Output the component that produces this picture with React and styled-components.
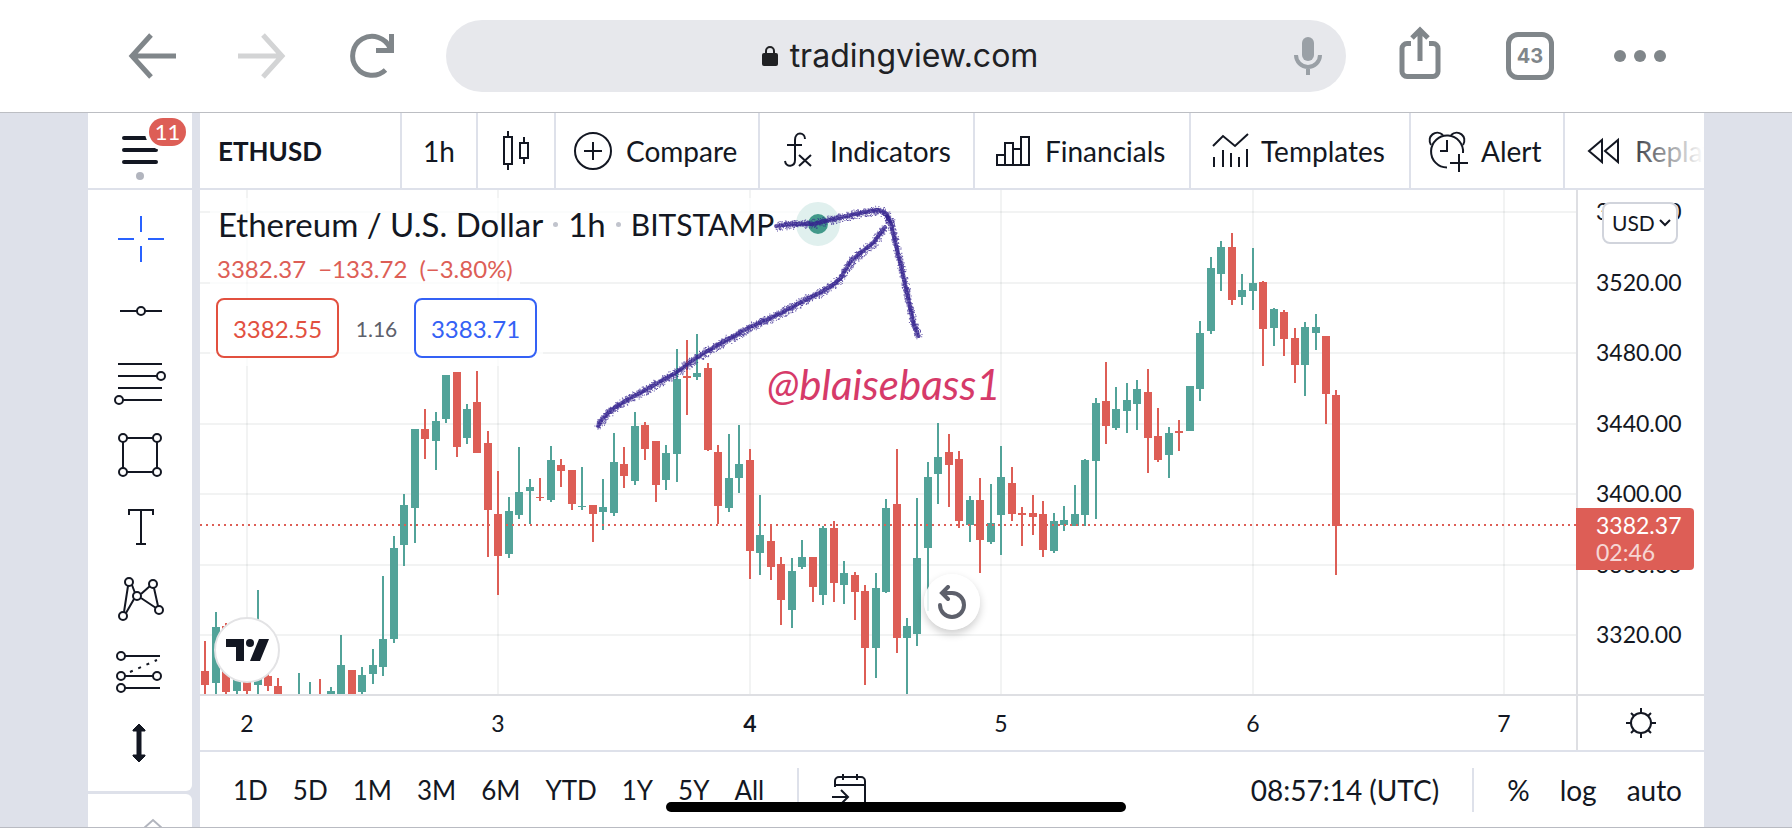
import React, { useState } from "react";
import styled, { createGlobalStyle } from "styled-components";

const GlobalStyle = createGlobalStyle`
	* {
		box-sizing: border-box;
	}
	body {
		margin: 0;
		background: #dee1ea;
		color: #131722;
		font-family: Lato, "Noto Sans", sans-serif;
	}
	button,
	select {
		font: inherit;
		color: inherit;
		background: none;
		border: none;
		padding: 0;
		margin: 0;
		cursor: pointer;
	}
	svg {
		display: block;
	}
`;

const Page = styled.div`
	min-height: 100vh;
	display: flex;
	flex-direction: column;
`;

/* ---------- browser bar ---------- */

const BrowserBar = styled.header`
	display: flex;
	align-items: center;
	gap: 50px;
	padding: 20px 128px;
	background: #fff;
	border-bottom: 1px solid #bcbec3;
`;

const NavGroup = styled.nav`
	display: flex;
	align-items: center;
	gap: 62px;
`;

const NavButton = styled.button`
	width: 48px;
	height: 48px;
	color: ${(props) => (props.disabled ? "#d3d4d5" : "#80868a")};
`;

const AddressBar = styled.div`
	flex: 1;
	height: 72px;
	display: grid;
	grid-template-columns: 1fr auto 1fr;
	align-items: center;
	padding: 0 24px 0 32px;
	border-radius: 36px;
	background: #e7e8ec;
`;

const Address = styled.button`
	grid-column: 2;
	display: flex;
	align-items: center;
	gap: 12px;
	font-family: Inter, sans-serif;
	font-size: 32px;
	line-height: 40px;
	color: #202124;
`;

const MicButton = styled.button`
	justify-self: end;
	color: #9aa0a6;
`;

const TabsButton = styled.button`
	width: 48px;
	height: 48px;
	border: 5px solid #80868a;
	border-radius: 12px;
	font-family: Inter, sans-serif;
	font-size: 20px;
	font-weight: 700;
	line-height: 38px;
	color: #80868a;
`;

/* ---------- workspace ---------- */

const Workspace = styled.div`
	flex: 1;
	display: flex;
	gap: 8px;
	padding: 0 88px;
	border-bottom: 1px solid #b9bbc2;
`;

const Sidebar = styled.aside`
	width: 104px;
	display: flex;
	flex-direction: column;
`;

const MenuButton = styled.button`
	position: relative;
	height: 77px;
	background: #fff;
	border-bottom: 2px solid #dee1ea;

	svg {
		margin-left: 34px;
	}
`;

const Badge = styled.span`
	position: absolute;
	top: 5px;
	left: 61px;
	width: 37px;
	height: 28px;
	border-radius: 14px;
	background: #dd5e56;
	box-shadow: 0 0 0 4px #fff;
	color: #fff;
	font-size: 22px;
	line-height: 28px;
`;

const Tools = styled.div`
	display: flex;
	flex-direction: column;
	padding: 13px 0 12px;
	background: #fff;
	border-bottom-right-radius: 6px;
`;

const ToolButton = styled.button`
	height: 72px;
	padding-left: 28px;
	color: ${(props) => (props.$active ? "#2962ff" : "#131722")};
`;

const SidebarEnd = styled.div`
	flex: 1;
	margin-top: 3px;
	padding: 24px 0 0 54px;
	background: #fff;
	border-top-right-radius: 6px;
	overflow: hidden;
`;

const Main = styled.main`
	flex: 1;
	min-width: 0;
	display: flex;
	flex-direction: column;
	background: #fff;
`;

const Toolbar = styled.div`
	position: relative;
	display: flex;
	height: 77px;
	overflow: hidden;
	border-bottom: 2px solid #dee1ea;

	&::after {
		content: "";
		position: absolute;
		top: 0;
		right: 0;
		bottom: 0;
		width: 84px;
		background: linear-gradient(to right, rgba(255, 255, 255, 0), #fff);
	}
`;

const ToolbarButton = styled.button`
	flex: none;
	width: ${(props) => props.$width}px;
	display: flex;
	align-items: center;
	justify-content: ${(props) => (props.$center ? "center" : "flex-start")};
	gap: 12px;
	padding-left: ${(props) => (props.$center ? 0 : 18)}px;
	border-right: 2px solid #dee1ea;
	font-size: ${(props) => (props.$bold ? 26 : 28)}px;
	font-weight: ${(props) => (props.$bold ? 700 : 400)};
	line-height: 32px;
	white-space: nowrap;
`;

/* ---------- chart ---------- */

const ChartGrid = styled.div`
	display: grid;
	grid-template-columns: 1fr 128px;
	grid-template-rows: 504px 56px;
	border-bottom: 2px solid #dee1ea;
`;

const Plot = styled.section`
	position: relative;
	overflow: hidden;
`;

const PriceAxis = styled.div`
	position: relative;
	border-left: 2px solid #dedfe3;
	font-size: 23px;
`;

const TimeAxis = styled.div`
	border-top: 2px solid #dedfe3;
	font-size: 23px;
`;

const AxisCorner = styled.button`
	display: grid;
	place-items: center;
	border-top: 2px solid #dedfe3;
	border-left: 2px solid #dedfe3;
`;

const LastPrice = styled.div`
	position: absolute;
	top: 318px;
	left: -2px;
	width: 118px;
	padding: 4px 0 4px 20px;
	border-radius: 0 4px 4px 0;
	background: #dd5e56;
	color: #fff;
	font-size: 23px;
	line-height: 27px;

	span {
		display: block;
		opacity: 0.75;
	}
`;

const Currency = styled.label`
	position: absolute;
	top: 12px;
	left: 24px;
	display: flex;
	align-items: center;
	width: 76px;
	height: 42px;
	border: 2px solid #d1d4dc;
	border-radius: 8px;
	background: #fff;

	select {
		appearance: none;
		width: 100%;
		padding-left: 8px;
		font-size: 21px;
		line-height: 28px;
		outline: none;
	}

	svg {
		position: absolute;
		right: 5px;
		pointer-events: none;
	}
`;

const Legend = styled.div`
	position: absolute;
	top: 8px;
	left: 10px;
	display: flex;
	flex-direction: column;
	align-items: flex-start;
`;

const LegendTitle = styled.h1`
	display: flex;
	align-items: center;
	gap: 10px;
	margin: 0;
	padding: 0 8px;
	background: rgba(255, 255, 255, 0.7);
	font-size: 33px;
	font-weight: 400;
	line-height: 52px;
`;

const Exchange = styled.span`
	font-size: 30px;
`;

const Separator = styled.i`
	width: 5px;
	height: 5px;
	border-radius: 50%;
	background: #c1c4cd;
`;

const Status = styled.span`
	width: 44px;
	height: 44px;
	margin-left: 12px;
	border: 12px solid #e0f0ee;
	border-radius: 50%;
	background: #42998a;
`;

const LegendValues = styled.div`
	display: flex;
	gap: 12px;
	padding: 0 7px;
	background: rgba(255, 255, 255, 0.7);
	color: #dd5e56;
	font-size: 24px;
	line-height: 38px;
`;

const Quotes = styled.div`
	display: flex;
	align-items: center;
	padding: 10px 6px 8px;
	background: rgba(255, 255, 255, 0.7);
`;

const QuoteButton = styled.button`
	width: 123px;
	height: 60px;
	border: 2px solid;
	border-radius: 8px;
	background: #fff;
	color: ${(props) => (props.$buy ? "#3461f5" : "#e2503f")};
	font-size: 24px;
`;

const Spread = styled.span`
	width: 75px;
	text-align: center;
	color: #5d606b;
	font-size: 21px;
`;

const Signature = styled.span`
	position: absolute;
	top: 170px;
	left: 567px;
	color: #d63a69;
	font-size: 42px;
	font-style: italic;
	line-height: 48px;
`;

const Logo = styled.a`
	position: absolute;
	left: 14px;
	bottom: 11px;
	display: grid;
	place-items: center;
	width: 66px;
	height: 66px;
	border: 2px solid #e3e3e5;
	border-radius: 50%;
	background: #fff;
`;

const ResetButton = styled.button`
	position: absolute;
	left: 724px;
	bottom: 64px;
	display: grid;
	place-items: center;
	width: 56px;
	height: 56px;
	border-radius: 50%;
	background: rgba(255, 255, 255, 0.85);
	box-shadow: 0 4px 8px rgba(0, 0, 0, 0.2);
`;

const Drawing = styled.svg`
	position: absolute;
	inset: 0;
	pointer-events: none;
`;

/* ---------- footer ---------- */

const Footer = styled.footer`
	flex: 1;
	display: flex;
	align-items: center;
	min-height: 75px;
	padding: 0 22px 0 33px;
	font-size: 28px;
	line-height: 32px;
`;

const Ranges = styled.div`
	display: flex;
	gap: 25px;
	font-size: 26px;
`;

const Divider = styled.span`
	width: 2px;
	height: 44px;
	margin: 0 33px;
	background: #dee1ea;
`;

const Clock = styled.button`
	margin-left: auto;
`;

const Scales = styled.div`
	display: flex;
	gap: 30px;
`;

const HomeIndicator = styled.div`
	position: fixed;
	left: 50%;
	bottom: 16px;
	width: 460px;
	height: 10px;
	margin-left: -230px;
	border-radius: 5px;
	background: #000;
`;

const Icon = ({ size = 40, height, stroke = 2, children }) => (
	<svg
		width={size}
		height={height || size}
		fill="none"
		stroke="currentColor"
		strokeWidth={stroke}
		overflow="visible"
		aria-hidden="true"
	>
		{children}
	</svg>
);

// [up, body top, body bottom, high, low], one per hour
const CANDLES = [
	[0, 671, 685, 641, 694], [1, 627, 683, 612, 694], [0, 626, 692, 623, 694],
	[1, 670, 691, 660, 694], [0, 670, 691, 660, 694], [1, 670, 685, 590, 694],
	[0, 676, 686, 674, 691], [0, 686, 694, 678, 694], null,
	[1, 694, 694, 673, 694], [1, 694, 694, 682, 694], [0, 694, 694, 679, 694],
	[1, 691, 694, 687, 694], [1, 665, 694, 635, 694], [0, 670, 694, 670, 694],
	[1, 675, 692, 667, 694], [1, 665, 674, 649, 684], [1, 639, 667, 576, 676],
	[1, 548, 639, 536, 643], [1, 505, 545, 494, 566], [1, 429, 508, 429, 543],
	[0, 429, 439, 409, 459], [1, 421, 441, 412, 470], [1, 375, 419, 375, 423],
	[0, 372, 447, 372, 457], [1, 409, 438, 404, 444], [0, 402, 453, 371, 453],
	[0, 443, 510, 431, 557], [0, 514, 556, 471, 595], [1, 511, 554, 497, 558],
	[1, 492, 515, 447, 519], [1, 487, 491, 479, 524], [0, 497, 498, 478, 501],
	[1, 460, 500, 446, 502], [0, 465, 471, 459, 487], [0, 470, 504, 470, 510],
	[1, 506, 507, 467, 510], [0, 505, 514, 505, 542], [1, 507, 512, 479, 530],
	[1, 462, 513, 433, 516], [0, 464, 476, 447, 488], [1, 426, 481, 412, 485],
	[0, 425, 449, 422, 460], [0, 441, 485, 441, 502], [1, 453, 480, 445, 490],
	[1, 379, 454, 349, 482], [0, 376, 378, 340, 415], [1, 373, 377, 334, 380],
	[0, 368, 450, 363, 451], [0, 452, 506, 445, 524], [1, 478, 508, 434, 512],
	[1, 464, 478, 425, 493], [0, 460, 551, 449, 579], [1, 535, 553, 495, 575],
	[0, 541, 567, 524, 580], [0, 564, 600, 557, 625], [1, 571, 610, 558, 628],
	[1, 557, 567, 540, 569], [0, 557, 587, 557, 602], [1, 528, 595, 526, 605],
	[0, 528, 583, 521, 602], [1, 573, 585, 561, 604], [0, 575, 592, 572, 620],
	[0, 591, 648, 585, 685], [1, 588, 648, 573, 678], [1, 508, 592, 499, 593],
	[0, 504, 638, 449, 653], [1, 626, 638, 618, 694], [1, 558, 634, 498, 646],
	[1, 477, 548, 462, 611], [1, 457, 474, 423, 504], [0, 452, 465, 434, 507],
	[0, 459, 521, 451, 528], [1, 500, 525, 496, 542], [0, 500, 540, 478, 573],
	[1, 523, 542, 484, 544], [1, 477, 515, 446, 555], [0, 483, 514, 467, 521],
	[0, 513, 515, 507, 546], [0, 513, 517, 495, 535], [0, 514, 550, 501, 557],
	[1, 521, 551, 513, 553], [1, 520, 525, 506, 531], [1, 514, 526, 485, 526],
	[1, 460, 515, 459, 526], [1, 403, 461, 398, 519], [0, 401, 426, 362, 444],
	[1, 409, 428, 387, 430], [1, 400, 411, 383, 433], [1, 389, 404, 380, 430],
	[0, 392, 438, 369, 473], [0, 436, 460, 408, 462], [1, 433, 455, 427, 478],
	[0, 431, 433, 420, 451], [1, 386, 431, 386, 431], [1, 333, 389, 321, 401],
	[1, 268, 331, 257, 334], [1, 247, 274, 241, 291], [0, 247, 300, 233, 305],
	[1, 290, 297, 274, 305], [1, 283, 291, 248, 310], [0, 282, 329, 281, 366],
	[1, 309, 328, 308, 346], [0, 312, 339, 310, 356], [0, 338, 365, 328, 383],
	[1, 327, 365, 322, 396], [1, 327, 333, 314, 350], [0, 336, 394, 336, 424],
	[0, 395, 526, 390, 575],
];

const PRICES = [
	["3560.00", 22], ["3520.00", 93], ["3480.00", 163], ["3440.00", 234],
	["3400.00", 304], ["3360.00", 375], ["3320.00", 445],
];
const DAYS = [["2", 47], ["3", 298], ["4", 550], ["5", 801], ["6", 1053], ["7", 1304]];
const PLOT_WIDTH = 1376;

const Candles = () => (
	<svg width="100%" height="504" viewBox="0 0 1376 504" preserveAspectRatio="none">
		{PRICES.map(([price, y]) => (
			<rect key={price} x="0" y={y - 1} width="1376" height="2" fill="#2a2e39" opacity="0.06" />
		))}
		{DAYS.map(([day, x]) => (
			<rect key={day} x={x - 1} y="0" width="2" height="504" fill="#2a2e39" opacity="0.06" />
		))}
		{CANDLES.map((candle, i) => {
			if (!candle) return null;
			const [up, top, bottom, high, low] = candle;
			const x = Math.round(5.15 + i * 10.475);
			return (
				<g key={i} fill={up ? "#52a399" : "#dd5e56"}>
					<rect x={x - 1} y={high - 190} width="2" height={low - high} />
					<rect x={x - 4} y={top - 190} width="8" height={bottom - top} />
				</g>
			);
		})}
		<path d="M0 335H1376" stroke="#dd5e56" strokeWidth="2" strokeDasharray="2 4" />
	</svg>
);

// Crayon strokes: a solid core with loose grain scattered round it
const STROKES = [
	{
		core: 4,
		points: [
			[398, 236], [403, 228], [410, 221], [420, 214], [432, 207], [447, 199],
			[477, 182], [497, 167], [523, 152], [550, 137], [577, 125], [607, 109],
			[623, 101], [634, 94], [641, 88], [645, 80], [651, 71], [660, 63],
			[673, 53], [679, 45], [685, 37],
		],
	},
	{
		core: 4,
		points: [
			[576, 36], [593, 34], [613, 34], [633, 29], [660, 23], [677, 20],
			[684, 22], [690, 31],
		],
	},
	{
		core: 4,
		points: [[687, 26], [691, 34], [693, 43], [700, 72], [707, 103], [713, 132], [718, 146]],
	},
];

const makeGrain = (points, radius) => {
	let seed = 7;
	const random = () => {
		seed = (seed * 16807) % 2147483647;
		return seed / 2147483647;
	};
	let d = "";
	for (let i = 1; i < points.length; i++) {
		const [x1, y1] = points[i - 1];
		const [x2, y2] = points[i];
		const count = Math.hypot(x2 - x1, y2 - y1) * 8;
		for (let n = 0; n < count; n++) {
			const t = random();
			const angle = random() * Math.PI * 2;
			const r = random() * radius;
			const x = x1 + (x2 - x1) * t + Math.cos(angle) * r;
			const y = y1 + (y2 - y1) * t + Math.sin(angle) * r;
			d += `M${x.toFixed(1)} ${y.toFixed(1)}h1v1h-1z`;
		}
	}
	return d;
};

const Crayon = () => (
	<Drawing width="1376" height="504">
		{STROKES.map(({ core, points }, i) => (
			<g key={i}>
				<polyline
					points={points.join(" ")}
					fill="none"
					stroke="#35238f"
					strokeWidth={core}
					strokeLinecap="round"
					strokeLinejoin="round"
					opacity="0.7"
				/>
				<path d={makeGrain(points, i === 2 ? 4 : 5)} fill="#35238f" opacity="0.8" />
			</g>
		))}
	</Drawing>
);

const TOOLS = [
	["Cross", <path d="M25 1v16M25 31v16M2 24h16M32 24h16" />],
	["Trend line", <><path d="M4 24h17M29 24h17" /><circle cx="25" cy="24" r="4" /></>],
	["Fib retracement", (
		<>
			<path d="M2 5h44M2 17h39M2 29h44M7 41h39" />
			<circle cx="45" cy="17" r="4" />
			<circle cx="3" cy="41" r="4" />
		</>
	)],
	["Rectangle", (
		<>
			<path d="M11 7h26M11 41h26M7 11v26M41 11v26" />
			<circle cx="7" cy="7" r="4" />
			<circle cx="41" cy="7" r="4" />
			<circle cx="7" cy="41" r="4" />
			<circle cx="41" cy="41" r="4" />
		</>
	)],
	["Text", <path d="M13 12V7h24v5M25 7v34M20 41h10" />],
	["XABCD pattern", (
		<>
			<path d="M12 11L8 37M16 10l3 8M25 19l9-8M38 13l4 18M40 33L25 23M18 24L10 38" />
			<circle cx="13" cy="7" r="4" />
			<circle cx="37" cy="9" r="4" />
			<circle cx="21" cy="21" r="4" />
			<circle cx="7" cy="41" r="4" />
			<circle cx="43" cy="35" r="4" />
		</>
	)],
	["Long position", (
		<>
			<path d="M9 9h35M9 29h28M9 41h35" />
			<path d="M14 25L41 13" strokeDasharray="3 6" />
			<circle cx="5" cy="9" r="4" />
			<circle cx="5" cy="29" r="4" />
			<circle cx="41" cy="29" r="4" />
			<circle cx="5" cy="41" r="4" />
		</>
	)],
	["Arrow", <path d="M23 5l6 6v1h-4v24h4v1l-6 6-6-6v-1h4V12h-4v-1z" fill="currentColor" strokeWidth="1" />],
];

const RANGES = ["1D", "5D", "1M", "3M", "6M", "YTD", "1Y", "5Y", "All"];

const Browser = () => (
	<BrowserBar>
		<NavGroup>
			<NavButton aria-label="Back">
				<Icon size={48} stroke={5}><path d="M48 24H4M23 3L4 24l19 21" /></Icon>
			</NavButton>
			<NavButton aria-label="Forward" disabled>
				<Icon size={48} stroke={5}><path d="M0 24h44M25 3l19 21-19 21" /></Icon>
			</NavButton>
			<NavButton aria-label="Reload">
				<Icon size={48} stroke={5}>
					<path d="M37.5 38A19.5 19.5 0 1 1 42 16" />
					<path d="M43.5 2v16.5H28" />
				</Icon>
			</NavButton>
		</NavGroup>
		<AddressBar>
			<Address>
				<svg width="16" height="20" aria-hidden="true">
					<rect y="7" width="16" height="13" rx="2" fill="#202124" />
					<path d="M4 8V5a4 4 0 0 1 8 0v3" fill="none" stroke="#202124" strokeWidth="2" />
				</svg>
				tradingview.com
			</Address>
			<MicButton aria-label="Voice search">
				<Icon size={28} height={38} stroke={4}>
					<rect x="8" y="0" width="12" height="24" rx="6" fill="currentColor" stroke="none" />
					<path d="M2 18a12 12 0 0 0 24 0M14 30v8" />
				</Icon>
			</MicButton>
		</AddressBar>
		<NavGroup>
			<NavButton aria-label="Share">
				<Icon size={48} stroke={5}>
					<path d="M15 11.5h-4a5 5 0 0 0-5 5v23a5 5 0 0 0 5 5h26a5 5 0 0 0 5-5v-23a5 5 0 0 0-5-5h-4" />
					<path d="M24 29V-1M16 6l8-8 8 8" />
				</Icon>
			</NavButton>
			<TabsButton>43</TabsButton>
			<NavButton aria-label="More">
				<Icon size={48}>
					<g fill="currentColor" stroke="none">
						<circle cx="4" cy="24" r="6" />
						<circle cx="24" cy="24" r="6" />
						<circle cx="44" cy="24" r="6" />
					</g>
				</Icon>
			</NavButton>
		</NavGroup>
	</BrowserBar>
);

const DrawingTools = () => {
	const [tool, setTool] = useState("Cross");

	return (
		<Sidebar>
			<MenuButton aria-label="Menu">
				<Icon size={36} height={44} stroke={4}>
					<path d="M2 9h32M2 21h32M2 33h32" strokeLinecap="round" />
					<circle cx="18" cy="47" r="4" fill="#b2b5be" stroke="none" />
				</Icon>
				<Badge>11</Badge>
			</MenuButton>
			<Tools>
				{TOOLS.map(([name, drawing]) => (
					<ToolButton
						key={name}
						aria-label={name}
						$active={name === tool}
						onClick={() => setTool(name)}
					>
						<Icon size={48}>{drawing}</Icon>
					</ToolButton>
				))}
			</Tools>
			<SidebarEnd>
				<svg width="22" height="9" fill="none" stroke="#b2b5be" strokeWidth="2">
					<path d="M1 11L11 2l10 9" />
				</svg>
			</SidebarEnd>
		</Sidebar>
	);
};

const ChartToolbar = () => (
	<Toolbar>
		<ToolbarButton $width={202} $bold>ETHUSD</ToolbarButton>
		<ToolbarButton $width={76} $center>1h</ToolbarButton>
		<ToolbarButton $width={78} $center aria-label="Candles">
			<Icon>
				<path d="M8 6h8v27H8zM24 12h8v15h-8zM12 0v6M12 33v6M28 6v6M28 27v6" />
			</Icon>
		</ToolbarButton>
		<ToolbarButton $width={204}>
			<Icon><circle cx="19" cy="20" r="18" /><path d="M19 11v18M10 20h18" /></Icon>
			Compare
		</ToolbarButton>
		<ToolbarButton $width={215}>
			<Icon>
				<path d="M27 8c0-7-10-8-10 1v20c0 7-9 8-10 1M9 14h15M21 24l12 11M33 24L21 35" />
			</Icon>
			Indicators
		</ToolbarButton>
		<ToolbarButton $width={216}>
			<Icon><path d="M4 34V24h8M12 34V12h8v22M20 18h8M28 34V6h8v28zM3 34h26" /></Icon>
			Financials
		</ToolbarButton>
		<ToolbarButton $width={220}>
			<Icon><path d="M4 15L14 5l12 10L39 3M5 26v10M14 19v17M22 22v14M30 26v10M38 18v18" /></Icon>
			Templates
		</ToolbarButton>
		<ToolbarButton $width={154}>
			<Icon>
				<path d="M34 22a16 16 0 1 0-16 14.5M18 9v11h-7M30 23v18M21 32h18" />
				<path d="M2 14C-3 5 7-2 14 4M34 14c5-9-5-16-12-10" />
			</Icon>
			Alert
		</ToolbarButton>
		<ToolbarButton $width={170}>
			<Icon><path d="M19 9v22L6 20zM35 9v22L22 20z" /></Icon>
			Replay
		</ToolbarButton>
	</Toolbar>
);

const Chart = () => (
	<ChartGrid>
		<Plot>
			<Candles />
			<Logo href="#" aria-label="TradingView">
				<svg width="43" height="22" fill="#131722">
					<path d="M0 0h18v22h-8V8H0zM33 0h10l-9 22H24z" />
					<circle cx="24" cy="4" r="4" />
				</svg>
			</Logo>
			<ResetButton aria-label="Reset chart">
				<svg width="28" height="34" fill="none" stroke="#5d606b" strokeWidth="4" strokeLinecap="round">
					<path d="M2 20a12 12 0 1 0 12-12H5M10 2L4 8l6 6" />
				</svg>
			</ResetButton>
			<Legend>
				<LegendTitle>
					Ethereum / U.S. Dollar <Separator /> 1h <Separator />
					<Exchange>BITSTAMP</Exchange>
					<Status />
				</LegendTitle>
				<LegendValues>
					<span>3382.37</span>
					<span>−133.72</span>
					<span>(−3.80%)</span>
				</LegendValues>
				<Quotes>
					<QuoteButton>3382.55</QuoteButton>
					<Spread>1.16</Spread>
					<QuoteButton $buy>3383.71</QuoteButton>
				</Quotes>
			</Legend>
			<Crayon />
			<Signature>@blaisebass1</Signature>
		</Plot>
		<PriceAxis>
			<svg width="100%" height="100%" fill="#131722">
				{PRICES.map(([price, y]) => (
					<text key={price} x="18" y={y + 8}>{price}</text>
				))}
			</svg>
			<LastPrice>
				3382.37
				<span>02:46</span>
			</LastPrice>
			<Currency>
				<select aria-label="Currency">
					<option>USD</option>
				</select>
				<svg width="12" height="8" fill="none" stroke="#131722" strokeWidth="2">
					<path d="M1 1l5 5 5-5" />
				</svg>
			</Currency>
		</PriceAxis>
		<TimeAxis>
			<svg width="100%" height="54" fill="#131722" textAnchor="middle">
				{DAYS.map(([day, x]) => (
					<text key={day} x={`${(x / PLOT_WIDTH) * 100}%`} y="36" fontWeight={day === "4" ? 700 : 400}>
						{day}
					</text>
				))}
			</svg>
		</TimeAxis>
		<AxisCorner aria-label="Chart settings">
			<Icon size={30}>
				<circle cx="15" cy="15" r="10" />
				<path d="M15 0v5M15 25v5M0 15h5M25 15h5M5 5l3 3M22 22l3 3M5 25l3-3M22 8l3-3" />
			</Icon>
		</AxisCorner>
	</ChartGrid>
);

const App = () => (
	<Page>
		<GlobalStyle />
		<Browser />
		<Workspace>
			<DrawingTools />
			<Main>
				<ChartToolbar />
				<Chart />
				<Footer>
					<Ranges>
						{RANGES.map((range) => (
							<button key={range}>{range}</button>
						))}
					</Ranges>
					<Divider />
					<button aria-label="Go to date">
						<Icon size={36} height={32}>
							<path d="M3 13V7a4 4 0 0 1 4-4h22a4 4 0 0 1 4 4v22a4 4 0 0 1-4 4h-9M3 11h30M11 0v6M25 0v6M0 23h15M9 16l7 7-7 7" />
						</Icon>
					</button>
					<Clock>08:57:14 (UTC)</Clock>
					<Divider />
					<Scales>
						<button>%</button>
						<button>log</button>
						<button>auto</button>
					</Scales>
				</Footer>
			</Main>
		</Workspace>
		<HomeIndicator />
	</Page>
);

export default App;
